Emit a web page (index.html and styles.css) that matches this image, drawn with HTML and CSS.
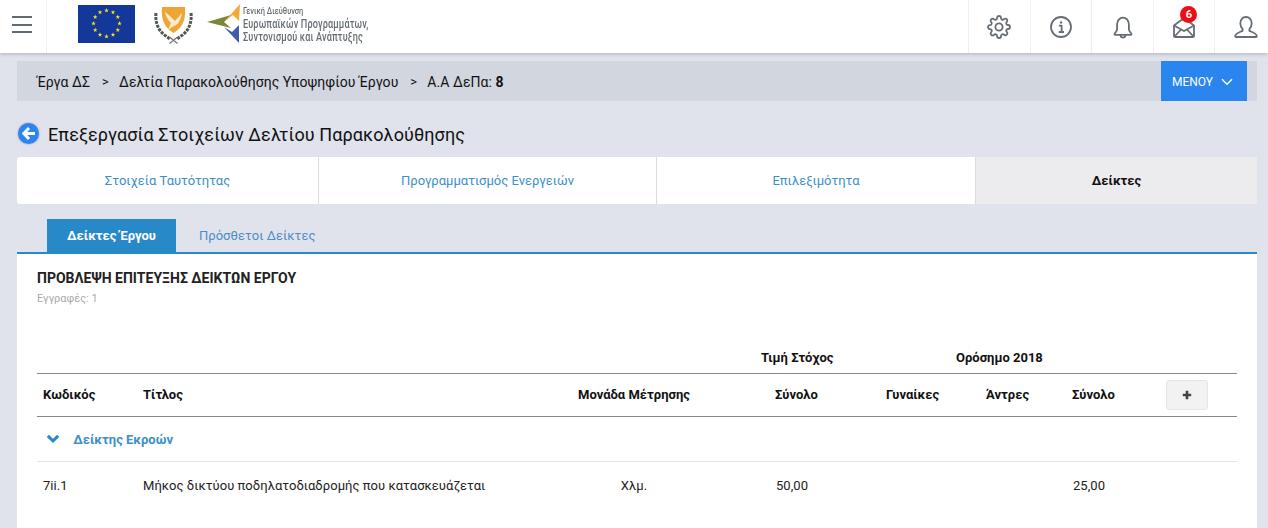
FILE: index.html
```html
<!DOCTYPE html>
<html lang="el">
<head>
<meta charset="utf-8">
<title>Επεξεργασία Στοιχείων Δελτίου Παρακολούθησης</title>
<link rel="stylesheet" href="styles.css">
</head>
<body>
<svg class="defs" width="0" height="0" aria-hidden="true">
  <defs>
    <polygon id="star" points="0,-2.4 .6,-.8 2.3,-.8 .9,.3 1.4,2 0,1 -1.4,2 -.9,.3 -2.3,-.8 -.6,-.8"/>
  </defs>
</svg>
<header class="topbar">
  <div class="burger-cell">
    <button class="burger" aria-label="menu"><span></span><span></span><span></span></button>
  </div>
  <div class="logos">
    <svg class="flag" width="57" height="38" viewBox="0 0 57 38">
      <rect width="57" height="38" fill="#14389a"/>
      <g fill="#f7e11b" transform="translate(0 -.5)">
        <use href="#star" x="28.5" y="6"/><use href="#star" x="35" y="7.8"/><use href="#star" x="39.8" y="12.5"/>
        <use href="#star" x="41.5" y="19"/><use href="#star" x="39.8" y="25.5"/><use href="#star" x="35" y="30.2"/>
        <use href="#star" x="28.5" y="32"/><use href="#star" x="22" y="30.2"/><use href="#star" x="17.2" y="25.5"/>
        <use href="#star" x="15.5" y="19"/><use href="#star" x="17.2" y="12.5"/><use href="#star" x="22" y="7.8"/>
      </g>
    </svg>
    <svg class="crest" width="40" height="39" viewBox="0 0 40 39">
      <path d="M8 2 H31 C32 12 30 22 19.500 28 C9 22 7 12 8 2Z" fill="#eda535"/>
      <path d="M11 7 C15 10 18 13 21 16 L28 8 C27 14 25 18 22 20 L18 22 L14 25 L17 18 C14 15 12 12 11 7Z" fill="#fbeacb"/>
      <path d="M2 8 C1 17 4 26 12 31 L16 34" fill="none" stroke="#4e5a4d" stroke-width="3" stroke-dasharray="3 1"/>
      <path d="M37 8 C38 17 35 26 27 31 L23 34" fill="none" stroke="#4e5a4d" stroke-width="3" stroke-dasharray="3 1"/>
      <path d="M15.500 38.500 L23.500 32 M23.500 38.500 L15.500 32" stroke="#777" stroke-width="1.200"/>
    </svg>
    <div class="agency">
      <svg class="arrows" width="34" height="40" viewBox="0 0 34 40">
        <path d="M0 18 L24 11 L17 18 L24 24Z" fill="#7b8838"/>
        <path d="M18 17 L33 0 L32 17 L26 11Z" fill="#f2aa37"/>
        <path d="M17 23 L32 39 L32 21 L25 28Z" fill="#3f5da8"/>
      </svg>
      <div class="agency-text">
        <span class="agency-small">Γενική Διεύθυνση</span>
        <span class="agency-big">Ευρωπαϊκών Προγραμμάτων,</span>
        <span class="agency-big">Συντονισμού και Ανάπτυξης</span>
      </div>
    </div>
  </div>
  <nav class="tools">
    <a class="tool" aria-label="ρυθμίσεις">
      <svg width="24" height="24" viewBox="0 0 24 24" class="ico"><circle cx="12" cy="12" r="3.6"/><path d="M19.4 15a1.65 1.65 0 0 0 .33 1.82l.06.06a2 2 0 0 1 0 2.83 2 2 0 0 1-2.83 0l-.06-.06a1.65 1.65 0 0 0-1.82-.33 1.65 1.65 0 0 0-1 1.51V21a2 2 0 0 1-2 2 2 2 0 0 1-2-2v-.09A1.65 1.65 0 0 0 9 19.4a1.65 1.65 0 0 0-1.82.33l-.06.06a2 2 0 0 1-2.83 0 2 2 0 0 1 0-2.83l.06-.06a1.65 1.65 0 0 0 .33-1.82 1.65 1.65 0 0 0-1.51-1H3a2 2 0 0 1-2-2 2 2 0 0 1 2-2h.09A1.65 1.65 0 0 0 4.6 9a1.65 1.65 0 0 0-.33-1.82l-.06-.06a2 2 0 0 1 0-2.83 2 2 0 0 1 2.83 0l.06.06a1.65 1.65 0 0 0 1.82.33H9a1.65 1.65 0 0 0 1-1.51V3a2 2 0 0 1 2-2 2 2 0 0 1 2 2v.09a1.65 1.65 0 0 0 1 1.51 1.65 1.65 0 0 0 1.82-.33l.06-.06a2 2 0 0 1 2.83 0 2 2 0 0 1 0 2.83l-.06.06a1.65 1.65 0 0 0-.33 1.82V9a1.65 1.65 0 0 0 1.51 1H21a2 2 0 0 1 2 2 2 2 0 0 1-2 2h-.09a1.65 1.65 0 0 0-1.51 1z"/></svg>
    </a>
    <a class="tool" aria-label="πληροφορίες">
      <svg width="24" height="24" viewBox="0 0 24 24" class="ico"><circle cx="12" cy="12" r="10"/><circle cx="12" cy="7.4" r="1.2" class="fill"/><path d="M9.8 10.6H12.6V16.8M9.8 17H15" /></svg>
    </a>
    <a class="tool" aria-label="ειδοποιήσεις">
      <svg width="24" height="24" viewBox="0 0 24 24" class="ico"><path d="M3.5 19.2c0-1.3 2.6-2.2 2.6-5V9.4C6.100 5.800 8.500 2.600 12 2.600s5.900 3.200 5.900 6.800v4.800c0 2.800 2.600 3.700 2.600 5 0 .4-.3.600-.7.600H4.200c-.4 0-.7-.2-.7-.6z"/><path d="M9.600 20c0 1.500 1 2.600 2.400 2.600s2.400-1.100 2.400-2.600"/></svg>
    </a>
    <a class="tool" aria-label="μηνύματα">
      <svg width="24" height="24" viewBox="0 0 24 24" class="ico mail"><path d="M2 10.500 12 3l10 7.500V21a1 1 0 0 1-1 1H3a1 1 0 0 1-1-1z"/><path d="M2.500 10.800 12 16l9.500-5.200M2.500 21.500 9 14.500M21.500 21.500 15 14.500"/></svg>
      <span class="badge">6</span>
    </a>
    <a class="tool" aria-label="χρήστης">
      <svg width="24" height="24" viewBox="0 0 24 24" class="ico"><path d="M12 2c-3.500 0-5.700 2.700-5.700 6.200 0 2.500 1 4.400 2.300 5.800v1.700c-1.500 1.200-7.100 2-7.400 5.500-.05.5.3.800.8.800h20c.5 0 .85-.3.800-.8-.3-3.500-5.900-4.300-7.400-5.500V14c1.300-1.400 2.300-3.300 2.300-5.800C17.700 4.700 15.500 2 12 2z"/></svg>
    </a>
  </nav>
</header>

<main class="page">
  <div class="crumbs">
    <ol class="crumb-list">
      <li>Έργα ΔΣ</li>
      <li class="sep">&gt;</li>
      <li>Δελτία Παρακολούθησης Υποψηφίου Έργου</li>
      <li class="sep">&gt;</li>
      <li>Α.Α ΔεΠα: <b>8</b></li>
    </ol>
    <button class="menu-btn">ΜΕΝΟΥ
      <svg width="12" height="8" viewBox="0 0 12 8"><path d="M1 1.200 6 6.200 11 1.200" fill="none" stroke="#fff" stroke-width="1.500"/></svg>
    </button>
  </div>

  <div class="title-row">
    <svg class="back" width="24" height="24" viewBox="0 0 24 24">
      <circle cx="11.500" cy="11.500" r="10.500" fill="#2a85ee"/>
      <path d="M12 6 6.800 11.500 12 17M7.500 11.500H18" fill="none" stroke="#fff" stroke-width="3"/>
    </svg>
    <h1>Επεξεργασία Στοιχείων Δελτίου Παρακολούθησης</h1>
  </div>

  <div class="steps">
    <a class="step s1">Στοιχεία Ταυτότητας</a>
    <a class="step s2">Προγραμματισμός Ενεργειών</a>
    <a class="step s3">Επιλεξιμότητα</a>
    <a class="step s4 current">Δείκτες</a>
  </div>

  <div class="subtabs">
    <a class="subtab active">Δείκτες Έργου</a>
    <a class="subtab">Πρόσθετοι Δείκτες</a>
  </div>

  <section class="panel">
    <h2>ΠΡΟΒΛΕΨΗ ΕΠΙΤΕΥΞΗΣ ΔΕΙΚΤΩΝ ΕΡΓΟΥ</h2>
    <p class="count">Εγγραφές: 1</p>
    <table class="grid">
      <colgroup>
        <col class="c1"><col class="c2"><col class="c3"><col class="c4"><col class="c5"><col class="c6"><col class="c7"><col class="c8">
      </colgroup>
      <thead>
        <tr class="top">
          <th colspan="3"></th>
          <th class="target">Τιμή Στόχος</th>
          <th colspan="3" class="mile">Ορόσημο 2018</th>
          <th></th>
        </tr>
        <tr class="heads">
          <th>Κωδικός</th>
          <th>Τίτλος</th>
          <th class="center">Μονάδα Μέτρησης</th>
          <th>Σύνολο</th>
          <th>Γυναίκες</th>
          <th>Άντρες</th>
          <th>Σύνολο</th>
          <th><button class="plus" aria-label="προσθήκη">
            <svg width="10" height="10" viewBox="0 0 10 10"><path d="M5 .8V9.200M.8 5H9.200" stroke="#444" stroke-width="2.600"/></svg>
          </button></th>
        </tr>
      </thead>
      <tbody>
        <tr class="group">
          <td colspan="8">
            <svg width="14" height="10" viewBox="0 0 14 10"><path d="M1.800 1.800 7 6.800 12.200 1.800" fill="none" stroke="#2b88c8" stroke-width="3"/></svg>
            <span>Δείκτης Εκροών</span>
          </td>
        </tr>
        <tr class="row">
          <td>7ii.1</td>
          <td>Μήκος δικτύου ποδηλατοδιαδρομής που κατασκευάζεται</td>
          <td class="center">Χλμ.</td>
          <td class="num">50,00</td>
          <td></td>
          <td></td>
          <td class="num">25,00</td>
          <td></td>
        </tr>
      </tbody>
    </table>
  </section>
</main>
</body>
</html>
```
FILE: styles.css
```css
* { box-sizing: border-box; }
html, body { margin: 0; height: 100%; overflow: hidden; }
body {
  display: flex;
  flex-direction: column;
  background: #e0e3ec;
  font-family: Roboto, "Noto Sans", sans-serif;
  color: #111;
}
.defs { position: absolute; }
.topbar {
  height: 53px;
  flex: none;
  display: flex;
  background: #fff;
  box-shadow: 0 1px 4px rgba(0, 0, 0, .22);
  position: relative;
}
.burger-cell {
  width: 47px;
  border-right: 1px solid #eee;
  display: flex;
  align-items: center;
  padding-left: 12px;
}
.burger {
  width: 20px;
  padding: 0;
  border: 0;
  background: none;
  display: flex;
  flex-direction: column;
  gap: 5.500px;
  margin-top: -4px;
}
.burger span { height: 2px; background: #5f6b75; }
.logos {
  flex: 1;
  display: flex;
  align-items: flex-start;
  padding: 5px 0 0 31px;
}
.flag { flex: none; }
.crest { flex: none; margin-left: 19px; }
.agency { display: flex; margin-left: 13px; margin-top: -1px; }
.arrows { flex: none; }
.agency-text {
  display: flex;
  flex-direction: column;
  margin-left: 2px;
  padding-top: 1px;
  color: #666d73;
  font-weight: 500;
  filter: blur(.3px);
  white-space: nowrap;
  transform: scaleX(.76);
  transform-origin: left top;
}
.agency-small { font-size: 9.800px; line-height: 11px; }
.agency-big { font-size: 12px; line-height: 13px; letter-spacing: .2px; }
.agency-small + .agency-big { margin-top: 2px; }
.tools { display: flex; margin-right: -8px; flex: none; }
.tool {
  width: 61.600px;
  border-left: 1px solid #eee;
  display: flex;
  align-items: center;
  justify-content: center;
  position: relative;
}
.ico {
  fill: none;
  stroke: #666d73;
  stroke-width: 1.800;
  stroke-linejoin: round;
}
.ico .fill { fill: #666d73; stroke: none; }
.badge {
  position: absolute;
  top: 6px;
  left: 26.500px;
  width: 17px;
  height: 17px;
  border-radius: 50%;
  background: #f00c14;
  color: #fff;
  font-size: 11px;
  font-weight: 700;
  line-height: 17px;
  text-align: center;
}
.page {
  flex: 1;
  min-height: 0;
  display: flex;
  flex-direction: column;
  padding: 8px 11px 0 17px;
}
.crumbs {
  height: 40px;
  flex: none;
  display: flex;
  align-items: center;
  justify-content: space-between;
  padding: 0 10px 0 20px;
  background: #d2d6df;
}
.crumb-list {
  display: flex;
  list-style: none;
  margin: 0;
  padding: 1px 0 0;
  font-size: 14px;
  letter-spacing: .05px;
}
.crumb-list .sep { width: 29px; padding-left: 12px; font-size: 13px; }
.menu-btn {
  width: 86px;
  height: 40px;
  border: 0;
  background: #2a85ee;
  color: #fff;
  font: 12px Roboto, sans-serif;
  display: flex;
  align-items: center;
  gap: 8px;
  padding: 2px 0 0 11px;
}
.title-row {
  display: flex;
  align-items: center;
  height: 24px;
  margin-top: 21px;
}
.back { flex: none; filter: drop-shadow(0 0 1px rgba(0,0,0,.3)); }
.title-row h1 {
  margin: 0 0 0 7px;
  font-size: 18px;
  letter-spacing: .1px;
  font-weight: 400;
  color: #111;
}
.steps {
  flex: none;
  display: flex;
  height: 47px;
  margin-top: 11px;
  background: #fff;
  border-radius: 3px;
  font-size: 13px;
}
.step {
  display: flex;
  align-items: center;
  justify-content: center;
  color: #3b8fcb;
  border-right: 1px solid #dcdcdf;
}
.s1 { width: 302px; }
.s2 { width: 338px; }
.s3 { width: 319px; }
.s4 { flex: 1; border-right: 0; }
.current { background: #ecebee; color: #111; font-weight: 700; }
.subtabs {
  flex: none;
  display: flex;
  gap: 3px;
  height: 33px;
  margin-top: 15px;
  padding-left: 30px;
  font-size: 13px;
}
.subtab {
  display: flex;
  align-items: center;
  padding: 0 20px;
  color: #4f8bc4;
  letter-spacing: .05px;
}
.subtab.active {
  background: #2789c7;
  color: #fff;
  font-weight: 700;
  letter-spacing: 0;
}
.panel {
  flex: 1;
  background: #fff;
  border-top: 2px solid #2789c7;
  padding: 16px 20px 0;
}
.panel h2 {
  margin: 0;
  font-size: 14px;
  line-height: 16px;
  font-weight: 700;
  color: #222;
}
.count {
  margin: 5px 0 0;
  font-size: 11px;
  line-height: 16px;
  color: #aaa;
}
.grid {
  width: 1200px;
  margin-top: 37px;
  border-collapse: collapse;
  table-layout: fixed;
  font-size: 13px;
}
.c1 { width: 100px; }
.c2 { width: 393px; }
.c3 { width: 239px; }
.c4 { width: 111px; }
.c5 { width: 100px; }
.c6 { width: 86px; }
.c7 { width: 94px; }
.c8 { width: 77px; }
th, td { padding: 0 0 0 6px; text-align: left; }
th { color: #111; font-weight: 700; }
th.center, td.center { text-align: center; padding: 0 31px 0 0; }
.top { height: 29px; }
.top th { vertical-align: middle; padding-bottom: 1px; border-bottom: 1px solid #888; }
.target { white-space: nowrap; position: relative; left: -8px; }
.top th.mile { padding-left: 76px; }
.top th.target { padding-left: 0; }
.heads { height: 43px; }
.heads th { border-bottom: 1px solid #888; }
.plus {
  width: 42px;
  height: 30px;
  display: flex;
  align-items: center;
  justify-content: center;
  padding: 0;
  background: #f2f2f3;
  border: 1px solid #e6e6e6;
  border-radius: 3px;
}
.group { height: 45px; }
.group td {
  border-bottom: 1px solid #e3e3e3;
  padding: 1px 0 0 9px;
  color: #3b8fcb;
  font-weight: 700;
}
.group svg { vertical-align: 0; }
.group span { margin-left: 10px; }
.row { height: 48px; }
.row td { color: #222; letter-spacing: .04px; }
.row td.num { padding-left: 7px; }
```
